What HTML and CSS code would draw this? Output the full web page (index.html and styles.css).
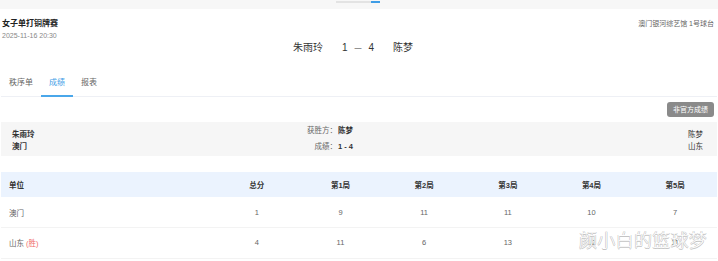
FILE: index.html
```html
<!DOCTYPE html>
<html lang="zh-CN">
<head>
<meta charset="utf-8">
<title>女子单打铜牌赛</title>
<link rel="stylesheet" href="styles.css">
</head>
<body>
<div class="topbar"><div class="scroll"><span class="scroll-track"></span><span class="scroll-thumb"></span></div></div>
<div class="page">
  <div class="header">
    <div class="head-row">
      <div class="title">女子单打铜牌赛</div>
      <div class="venue">澳门银河综艺馆 1号球台</div>
    </div>
    <div class="date">2025-11-16 20:30</div>
    <div class="scoreline">
      <span class="pl pl-left">朱雨玲</span>
      <span class="score"><span>1</span><span class="dash">—</span><span>4</span></span>
      <span class="pl pl-right">陈梦</span>
    </div>
  </div>
  <div class="tabs">
    <div class="tab">秩序单</div>
    <div class="tab active">成绩</div>
    <div class="tab">报表</div>
  </div>
  <div class="badge-row"><span class="badge">非官方成绩</span></div>
  <div class="panel">
    <div class="side side-left"><div>朱雨玲</div><div>澳门</div></div>
    <div class="mid">
      <div class="lbl">获胜方：</div><div class="val">陈梦</div>
      <div class="lbl">成绩：</div><div class="val">1 - 4</div>
    </div>
    <div class="side side-right"><div>陈梦</div><div>山东</div></div>
  </div>
  <table class="results">
    <colgroup><col class="c-first"><col><col><col><col><col><col></colgroup>
    <thead>
      <tr><th class="unit">单位</th><th>总分</th><th>第1局</th><th>第2局</th><th>第3局</th><th>第4局</th><th>第5局</th></tr>
    </thead>
    <tbody>
      <tr><td class="unit">澳门</td><td>1</td><td>9</td><td>11</td><td>11</td><td>10</td><td>7</td></tr>
      <tr><td class="unit">山东 <span class="win">(胜)</span></td><td>4</td><td>11</td><td>6</td><td>13</td><td>12</td><td>11</td></tr>
    </tbody>
  </table>
</div>
<div class="watermark">颜小白的篮球梦</div>
</body>
</html>
```

FILE: styles.css
```css
* { box-sizing: border-box; }
html, body { margin: 0; padding: 0; background: #fff; }
body {
  font-family: "Liberation Sans", "Noto Sans CJK SC", sans-serif;
  color: #333;
  width: 718px;
  height: 261px;
  overflow: hidden;
  position: relative;
}
.topbar {
  height: 9px;
  background: #f7f7f7;
  display: flex;
  justify-content: center;
  padding-top: 1px;
}
.scroll { display: flex; height: 2px; margin-left: -3px; }
.scroll-track { width: 35px; background: #e3e3e3; }
.scroll-thumb { width: 9px; background: #3f9de6; }

.page { padding: 0 1px; }
.header { padding: 9px 3px 0 1px; }
.head-row { display: flex; justify-content: space-between; line-height: 12px; }
.title { font-size: 8px; font-weight: 700; color: #222; }
.venue { font-size: 7px; color: #666; }
.date { font-size: 7px; line-height: 11px; color: #888; }
.scoreline {
  display: grid;
  grid-template-columns: 1fr auto 1fr;
  column-gap: 19px;
  font-size: 10px;
  line-height: 14px;
  color: #333;
}
.pl-left { text-align: right; }
.pl-right { text-align: left; }
.score { display: flex; align-items: center; gap: 7px; }
.dash { font-size: 7px; }

.tabs {
  margin-top: 14px;
  display: flex;
  border-bottom: 1px solid #eef0f5;
}
.tab {
  font-size: 8px;
  line-height: 12px;
  padding: 8px 8px 6px;
  color: #666;
  border-bottom: 2px solid transparent;
  margin-bottom: -1px;
}
.tab.active { color: #3f9de6; border-bottom-color: #4aa7ea; }

.badge-row { display: flex; justify-content: flex-end; margin-top: 5px; padding-right: 3px; }
.badge {
  font-size: 7px;
  line-height: 15px;
  padding: 0 6px;
  color: #fff;
  background: #8a8a8a;
  border-radius: 3px;
}

.panel {
  margin-top: 5px;
  height: 34px;
  background: #f6f6f6;
  display: grid;
  grid-template-columns: 295px auto 1fr auto;
  align-items: center;
  padding: 0 14px 0 11px;
}
.side { font-size: 7.5px; line-height: 12px; font-weight: 700; color: #333; padding-top: 3px; }
.side-right { text-align: right; font-weight: 400; }
.mid {
  display: grid;
  grid-template-columns: auto auto;
  justify-content: start;
  column-gap: 1px;
  font-size: 7.5px;
  line-height: 16px;
}
.lbl { text-align: right; color: #666; }
.val { font-weight: 700; color: #333; }

.results {
  margin-top: 16px;
  width: 716px;
  border-collapse: collapse;
  table-layout: fixed;
  font-size: 7.5px;
}
.results col { width: 83.67px; }
.results col.c-first { width: 214px; }
.results th {
  height: 25px;
  background: #ebf3fe;
  font-weight: 700;
  color: #333;
  text-align: center;
  padding: 0;
}
.results td {
  height: 30.5px;
  color: #666;
  text-align: center;
  border-bottom: 1px solid #f3f3f3;
  padding: 0;
}
.results .unit { text-align: left; padding-left: 8px; }
.win { color: #f06a6a; }

.watermark {
  position: absolute;
  left: 579px;
  top: 228px;
  font-size: 18px;
  line-height: 26px;
  font-weight: 300;
  color: #fff;
  letter-spacing: 0.3px;
  text-shadow: 0.5px 0 0 #c4c4c4, -0.5px 0 0 #c4c4c4, 0 0.5px 0 #c4c4c4, 0 -0.5px 0 #c4c4c4;
}
```
